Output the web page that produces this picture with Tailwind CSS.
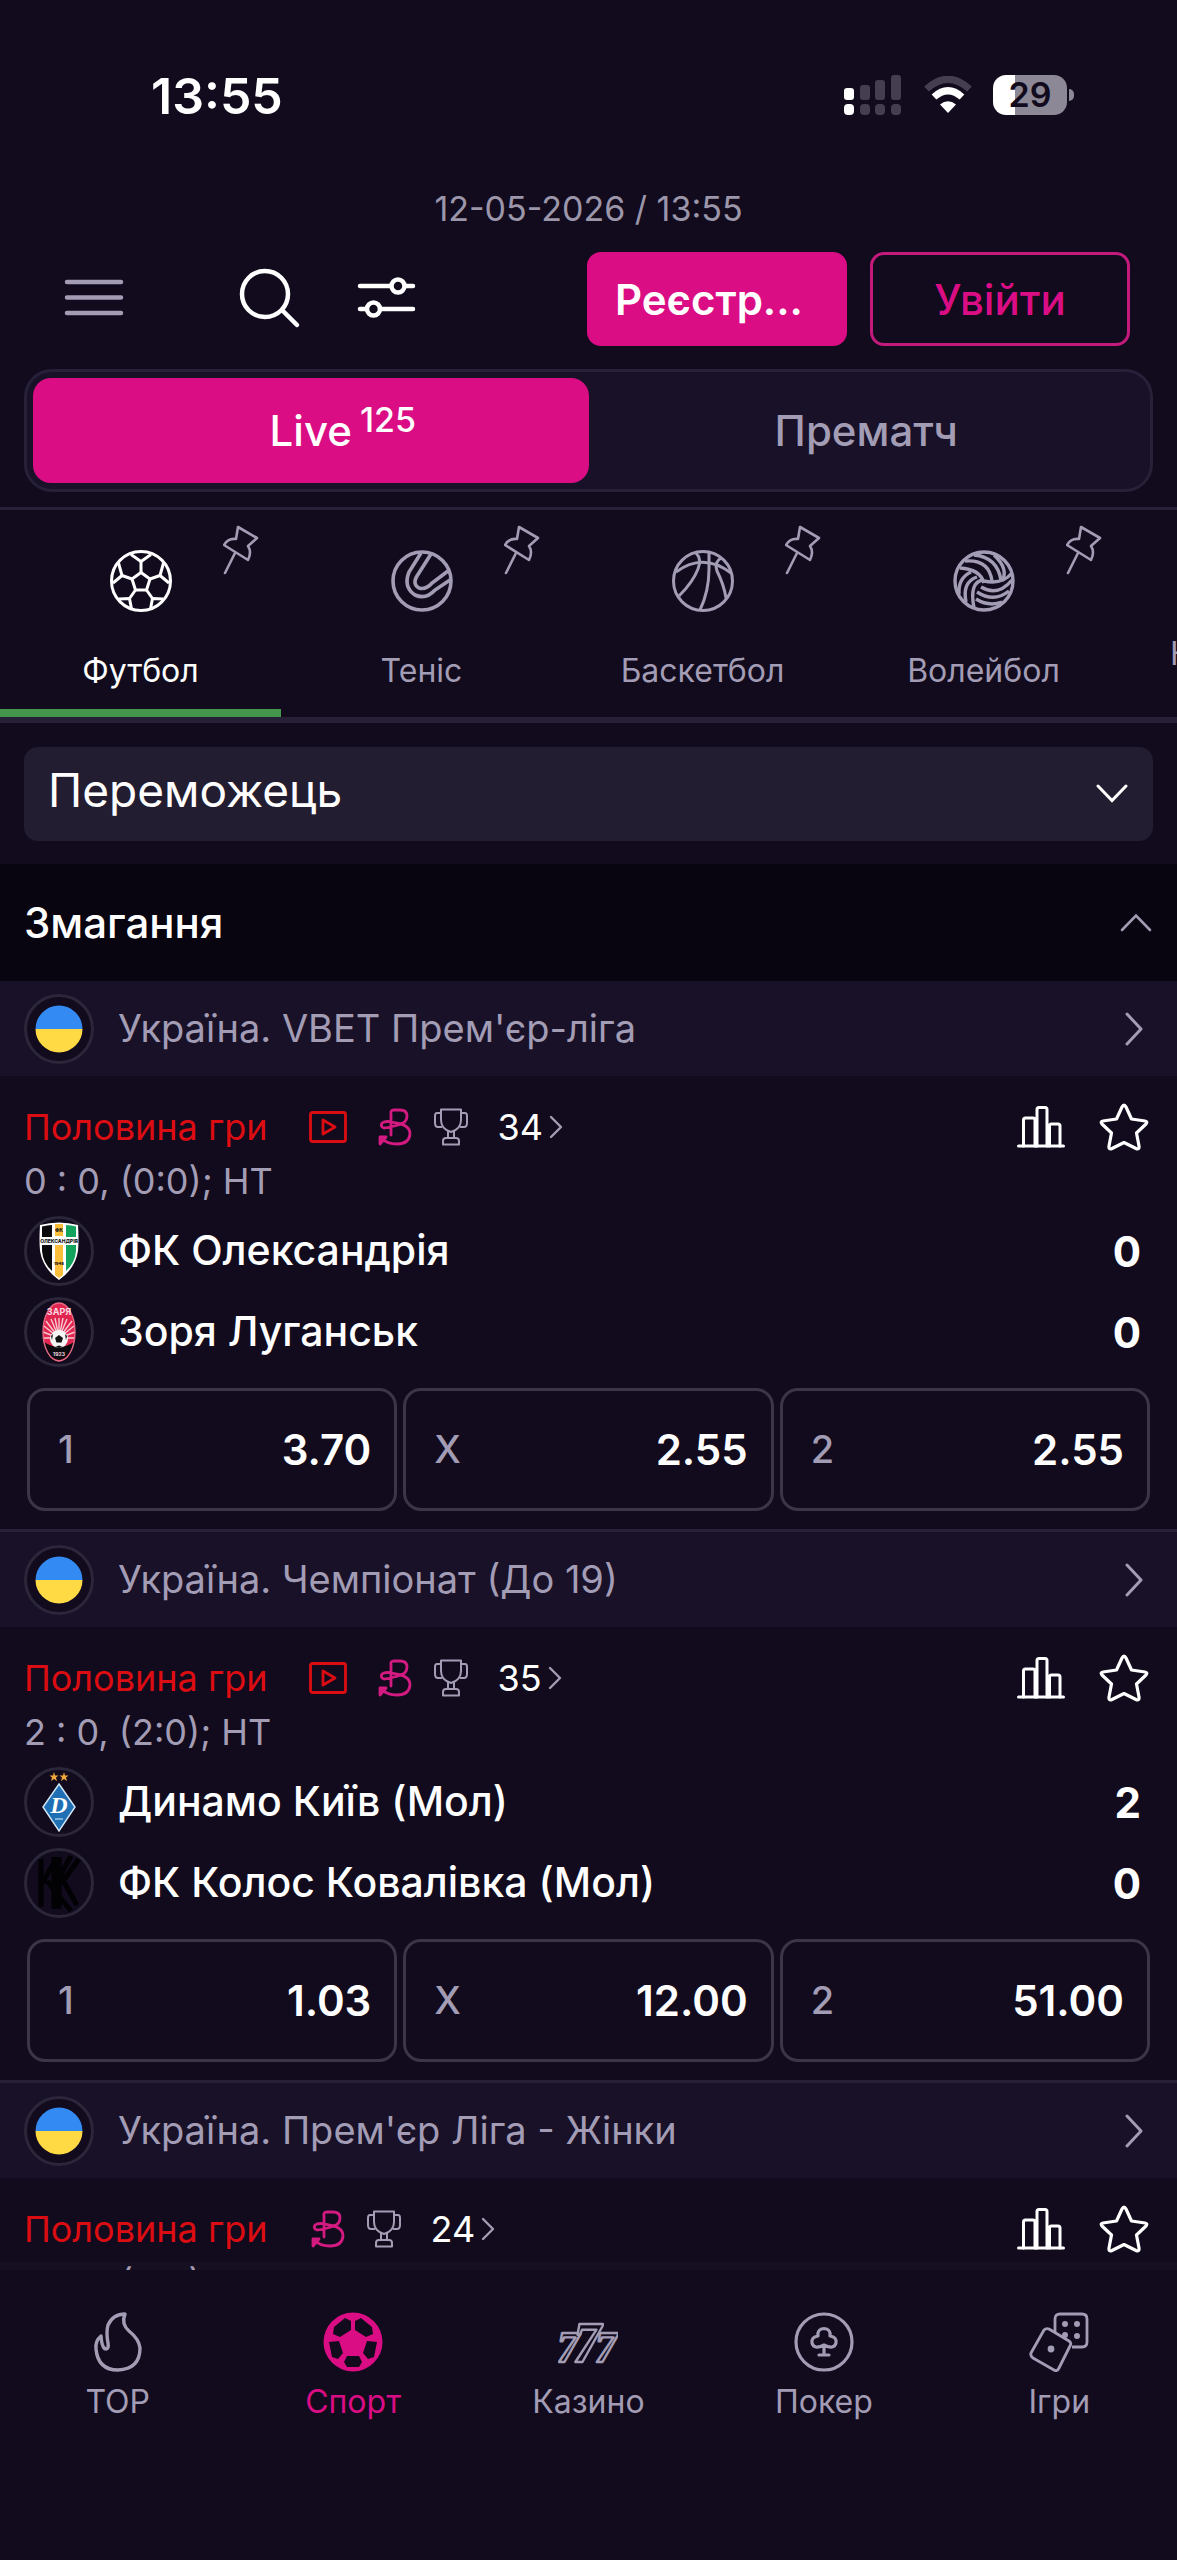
<!DOCTYPE html>
<html lang="uk">
<head>
  <meta charset="UTF-8" />
  <meta name="viewport" content="width=device-width, initial-scale=1.0" />
  <title>Спорт Live</title>
  <script src="https://cdn.jsdelivr.net/npm/@tailwindcss/browser@4"></script>
</head>
<body class="bg-[#110b1d] text-white font-['Inter','Noto_Sans',sans-serif] flex flex-col h-screen overflow-hidden">

  <!-- SVG symbols shared by the page -->
  <svg class="hidden">
    <symbol id="pin" viewBox="0 0 36 50">
      <path d="M15 2 L34 13 L25 21 Q29 27 25 35 L1 20 Q5 13 13 14 Z M12 28 L2 48" fill="none" stroke="currentColor" stroke-width="2.6" stroke-linejoin="round" stroke-linecap="round" />
    </symbol>
    <symbol id="chevron-right" viewBox="0 0 18 34">
      <path d="M2 2 L16 17 L2 32" fill="none" stroke="currentColor" stroke-width="3" stroke-linecap="round" stroke-linejoin="round" />
    </symbol>
    <symbol id="chevron-small" viewBox="0 0 14 24">
      <path d="M2 2 L12 12 L2 22" fill="none" stroke="currentColor" stroke-width="2.4" stroke-linecap="round" stroke-linejoin="round" />
    </symbol>
    <symbol id="video" viewBox="0 0 38 32">
      <g fill="none" stroke="currentColor" stroke-width="2.8" stroke-linejoin="round">
        <rect x="1.5" y="1.5" width="35" height="29" rx="2" />
        <path d="M14 9 L26 16 L14 23 Z" />
      </g>
    </symbol>
    <symbol id="bet" viewBox="0 0 34 38">
      <g fill="none" stroke="currentColor" stroke-width="2.8" stroke-linecap="round" stroke-linejoin="round">
        <path d="M13 27 V6 Q12 2 16 2 H22 Q29 2 29 8 Q29 15 20 17 Q10 20 6 20 Q2 19 4 15 Q8 12 18 15 Q32 17 32 26 Q31 36 19 36 Q9 36 3 30" />
        <path d="M2 36 V29 H8 Z" />
      </g>
    </symbol>
    <symbol id="trophy" viewBox="0 0 34 38">
      <g fill="none" stroke="currentColor" stroke-width="2" stroke-linejoin="round">
        <path d="M7 1.5 H27 V12 Q27 21 17 24 Q7 21 7 12 Z" />
        <path d="M7 5 H3 Q1 5 1 8 V15 Q1 19 4 19 H8 M27 5 H31 Q33 5 33 8 V15 Q33 19 30 19 H26" />
        <path d="M14 23 V30 M20 23 V30 M9 36.5 V33 Q9 30 12 30 H22 Q25 30 25 33 V36.5 Z" />
      </g>
    </symbol>
    <symbol id="stats" viewBox="0 0 48 42">
      <g fill="none" stroke="currentColor" stroke-width="3" stroke-linejoin="round" stroke-linecap="round">
        <path d="M1.5 40 H46.5" />
        <path d="M6.5 40 V14 Q6.5 12 8.5 12 H16 Q18 12 18 14 V40 M20 40 V3.5 Q20 1.5 22 1.5 H28 Q30 1.5 30 3.5 V40 M32.5 40 V20 Q32.5 18 34.5 18 H41 Q43 18 43 20 V40" />
      </g>
    </symbol>
    <symbol id="star" viewBox="0 0 50 48">
      <path d="M25 2 Q26 2 27 4 L32.5 16 L46 18 Q49 18.5 47 21 L37.5 30 L40 43 Q40.5 47 37 45.5 L25 39.5 L13 45.5 Q9.5 47 10 43 L12.5 30 L3 21 Q1 18.5 4 18 L17.5 16 L23 4 Q24 2 25 2 Z" fill="none" stroke="currentColor" stroke-width="3.2" stroke-linejoin="round" />
    </symbol>
    <symbol id="flag-ua" viewBox="0 0 48 48">
      <path d="M0.5 24 A23.5 23.5 0 0 1 47.5 24 Z" fill="#338af3" />
      <path d="M0.5 24 A23.5 23.5 0 0 0 47.5 24 Z" fill="#ffda44" />
    </symbol>
  </svg>

  <!-- Status bar -->
  <div class="h-48 shrink-0 flex items-start justify-between pt-[66px] pl-[151px] pr-[103px]">
    <span class="text-[50px] leading-[60px] font-semibold">13:55</span>
    <div class="flex items-center gap-[20px] h-[58px]">
      <svg class="w-[60px] h-[40px]" viewBox="0 0 60 40">
        <g fill="#fff"><rect x="1" y="13" width="10" height="12" rx="3" /><rect x="1" y="29" width="10" height="11" rx="4" /></g>
        <g fill="#443e50">
          <rect x="17" y="10" width="10" height="15" rx="3" /><rect x="17" y="29" width="10" height="11" rx="4" />
          <rect x="32" y="5" width="10" height="20" rx="3" /><rect x="32" y="29" width="10" height="11" rx="4" />
          <rect x="48" y="0" width="10" height="25" rx="3" /><rect x="48" y="29" width="10" height="11" rx="4" />
        </g>
      </svg>
      <svg class="w-[50px] h-[38px]" viewBox="0 0 50 38">
        <path d="M3.5 13 Q25 -6.5 46.5 13" fill="none" stroke="#443e50" stroke-width="7" />
        <path d="M11 21 Q25 8.5 39 21" fill="none" stroke="#fff" stroke-width="7" />
        <path d="M17 28.5 Q25 22 33 28.5 L25 37 Z" fill="#fff" />
      </svg>
      <div class="flex items-center gap-[2px]">
        <div class="w-[74px] h-[40px] rounded-[13px] bg-linear-to-r from-white from-30% to-[#8d8896] to-30% text-[#110b1d] text-[34px] leading-[40px] font-semibold text-center">29</div>
        <div class="w-[5px] h-[12px] rounded-r-full bg-[#8d8896]"></div>
      </div>
    </div>
  </div>

  <!-- Header -->
  <header class="shrink-0">
    <p class="text-center text-[34px] leading-[34px] text-[#9c96ab]">12-05-2026 / 13:55</p>
    <div class="flex items-center pl-[64px] pr-[47px] mt-[26px] h-[94px]">
      <button aria-label="Меню" class="text-[#a39cb5]">
        <svg class="w-[60px] h-[60px]" viewBox="0 0 60 60"><path d="M3 13 H57 M3 28.5 H57 M3 44 H57" stroke="currentColor" stroke-width="4.5" stroke-linecap="round" /></svg>
      </button>
      <button aria-label="Пошук" class="ml-[115px]">
        <svg class="w-[62px] h-[62px]" viewBox="0 0 62 62"><g fill="none" stroke="#fff" stroke-width="4.5" stroke-linecap="round"><circle cx="26" cy="26" r="23" /><path d="M43 42 L58 57" /></g></svg>
      </button>
      <button aria-label="Фільтр" class="ml-[56px]">
        <svg class="w-[60px] h-[60px]" viewBox="0 0 60 60"><g fill="none" stroke="#fff" stroke-width="4.5" stroke-linecap="round"><path d="M3 17 H34 M48 17 H56 M3 40 H9 M23 40 H56" /><circle cx="41" cy="17" r="6.5" /><circle cx="16.5" cy="40" r="6.5" /></g></svg>
      </button>
      <button class="ml-auto w-[260px] h-full rounded-[14px] bg-[#db0d84] text-[42px] font-semibold pl-[28px] text-left">Реєстр...</button>
      <button class="ml-[23px] w-[260px] h-full rounded-[14px] border-3 border-[#c31a7c] text-[#db0d84] text-[42px] font-medium">Увійти</button>
    </div>
    <div class="mx-[24px] mt-[23px] h-[123px] flex rounded-[28px] border-3 border-[#262138] bg-[#181128] p-[6px]">
      <button class="flex-1 rounded-[18px] bg-[#db0d84] text-[42px] font-medium">
        <span class="relative">Live<span class="absolute left-full bottom-[11px] ml-[8px] text-[34px]">125</span></span>
      </button>
      <button class="flex-1 text-[42px] font-medium text-[#a39cb5]">Прематч</button>
    </div>
  </header>

  <!-- Sports -->
  <nav class="mt-[15px] shrink-0 border-t-3 border-b-6 border-[#262136] h-[216px] flex overflow-hidden text-[32px] text-[#a39cb5]">
    <a href="#" class="relative w-[281px] shrink-0 flex flex-col items-center pt-[39px] border-b-8 border-[#43964a] text-white">
      <svg class="w-[64px] h-[64px]" viewBox="0 0 64 64">
        <g fill="none" stroke="currentColor" stroke-width="3" stroke-linejoin="round">
          <circle cx="32" cy="32" r="29.5" />
          <path d="M32 23.5 L41 30 L37.5 41 H26.5 L23 30 Z" />
          <path d="M32 23.5 V12.5 M41 30 L51 26.5 M37.5 41 L43.5 49.5 M26.5 41 L20.5 49.5 M23 30 L13 26.5" />
          <path d="M22 5.5 L32 12.5 L42 5.5 M54.5 14 L51 26.5 L60 34 M54 50 L43.5 49.5 L41.5 60 M22.5 60 L20.5 49.5 L10 50 M4 34 L13 26.5 L9.5 14" />
        </g>
      </svg>
      <svg class="absolute top-[15px] right-[22px] w-[36px] h-[50px] text-[#a39cb5]"><use href="#pin" /></svg>
      <span class="mt-[35px] leading-[46px]">Футбол</span>
    </a>
    <a href="#" class="relative w-[281px] shrink-0 flex flex-col items-center pt-[39px]">
      <svg class="w-[64px] h-[64px]" viewBox="0 0 64 64">
        <g fill="none" stroke="currentColor" stroke-width="3.6">
          <circle cx="32" cy="32" r="29" />
          <path d="M31 4 L19 23 Q13 38 25 46 Q36 51 45 41 L60 31" />
          <path d="M41 5 L27 27 Q22 35 29 39 Q36 41 42 34 L58 22" />
        </g>
      </svg>
      <svg class="absolute top-[15px] right-[22px] w-[36px] h-[50px]"><use href="#pin" /></svg>
      <span class="mt-[35px] leading-[46px]">Теніс</span>
    </a>
    <a href="#" class="relative w-[281px] shrink-0 flex flex-col items-center pt-[39px]">
      <svg class="w-[64px] h-[64px]" viewBox="0 0 64 64">
        <g fill="none" stroke="currentColor" stroke-width="3">
          <circle cx="32" cy="32" r="29.5" />
          <path d="M5 23 Q32 3 60 24" />
          <path d="M25 4 Q31 10 27 20 Q22 33 8 47 M38 3 V20 Q38 42 29 61 M50 9 Q43 13 46 22 Q53 36 55 49" />
        </g>
      </svg>
      <svg class="absolute top-[15px] right-[22px] w-[36px] h-[50px]"><use href="#pin" /></svg>
      <span class="mt-[35px] leading-[46px]">Баскетбол</span>
    </a>
    <a href="#" class="relative w-[281px] shrink-0 flex flex-col items-center pt-[39px]">
      <svg class="w-[64px] h-[64px]" viewBox="0 0 64 64">
        <g fill="none" stroke="currentColor" stroke-width="3.4">
          <circle cx="32" cy="32" r="29" />
          <path d="M40 32 Q37 10 13 12 M32 34 Q28 20 8 19 M49 31 Q45 8 22 6" />
          <path d="M50 32 Q57 20 42 6 M31 31 Q17 33 22 59 M25 28 Q10 33 14 53 M19 23 Q6 29 7 45" />
          <path d="M29 38 Q46 48 60 31 M25 43 Q42 54 57 42 M24 50 Q37 58 50 53 M32 32 Q50 36 60 24" />
        </g>
      </svg>
      <svg class="absolute top-[15px] right-[22px] w-[36px] h-[50px]"><use href="#pin" /></svg>
      <span class="mt-[35px] leading-[46px]">Волейбол</span>
    </a>
    <a href="#" class="w-[281px] shrink-0 pt-[120px] pl-[46px]"><span class="leading-[40px]">Кіберспорт</span></a>
  </nav>

  <!-- Matches -->
  <main class="flex-1 min-h-0 overflow-hidden">
    <div class="relative mx-[24px] mt-[24px] mb-[23px]">
      <select aria-label="Ринок" class="block appearance-none w-full h-[94px] rounded-[14px] bg-[#231d31] pl-[24px] pb-[8px] text-[46px] text-white">
        <option>Переможець</option>
      </select>
      <svg class="absolute right-[25px] top-[37px] w-[32px] h-[19px] pointer-events-none" viewBox="0 0 32 19"><path d="M2 2 L16 16.5 L30 2" fill="none" stroke="#fff" stroke-width="3" stroke-linecap="round" /></svg>
    </div>

    <button class="flex w-full items-center justify-between bg-[#080410] h-[117px] pl-[24px] pr-[25px] text-[42px] font-medium">
      Змагання
      <svg class="w-[32px] h-[19px] text-[#a39cb5]" viewBox="0 0 32 19"><path d="M2 17 L16 2.5 L30 17" fill="none" stroke="currentColor" stroke-width="2.6" stroke-linecap="round" /></svg>
    </button>

    <!-- Прем'єр-ліга -->
    <section>
      <a href="#" class="flex items-center h-[95px] bg-[#181128] pl-[24px] pr-[34px] text-[38px] text-[#a39cb5]">
        <span class="size-[70px] rounded-full border-3 border-[#2b263a] bg-[#110b1d] flex items-center justify-center"><svg class="size-[48px]"><use href="#flag-ua" /></svg></span>
        <span class="ml-[24px] flex-1">Україна. VBET Прем'єр-ліга</span>
        <svg class="w-[18px] h-[34px]"><use href="#chevron-right" /></svg>
      </a>
      <div class="px-[24px] pt-[24px] pb-[18px]">
        <div class="flex items-center h-[54px] text-[36px]">
          <span class="text-[#dc0d12]">Половина гри</span>
          <svg class="ml-[42px] w-[38px] h-[32px] text-[#dc0d12]"><use href="#video" /></svg>
          <svg class="ml-[31px] w-[34px] h-[38px] text-[#d31a80]"><use href="#bet" /></svg>
          <svg class="ml-[22px] w-[34px] h-[38px] text-[#a39cb5]"><use href="#trophy" /></svg>
          <a href="#" class="ml-[29px] flex items-center gap-[6px]">34 <svg class="w-[14px] h-[24px] text-[#a39cb5]"><use href="#chevron-small" /></svg></a>
          <button aria-label="Статистика" class="ml-auto"><svg class="w-[48px] h-[42px]"><use href="#stats" /></svg></button>
          <button aria-label="Обране" class="ml-[34px] mr-[4px]"><svg class="w-[50px] h-[48px]"><use href="#star" /></svg></button>
        </div>
        <p class="text-[36px] leading-[54px] text-[#a39cb5]">0 : 0, (0:0); HT</p>
        <div class="mt-[8px] h-[70px] flex items-center text-[41px] font-medium">
          <span class="size-[70px] rounded-full border-3 border-[#2b263a] flex items-center justify-center">
            <svg class="size-[64px]" viewBox="0 0 64 64">
              <path d="M13 6 Q32 1 51 6 Q52 20 51 32 Q48 50 32 61 Q16 50 13 32 Q12 20 13 6 Z" fill="#fff" />
              <path d="M15 7.5 Q20 6 25 6 V18 H15 Z M15 26 H25 V52 Q16 44 15 32 Z" fill="#0a0a0c" />
              <path d="M28 5 H36 V17 H28 Z M28 26 H36 V56 L32 59 L28 56 Z" fill="#fbbf3c" />
              <path d="M39 6 Q44 6 49 7.5 V18 H39 Z M39 26 H49 V32 Q48 44 39 52 Z" fill="#12a35c" />
              <g fill="#111" font-weight="800" text-anchor="middle">
                <text x="32" y="13" font-size="5">ФК</text>
                <text x="32" y="24" font-size="5">ОЛЕКСАНДРІЯ</text>
                <text x="32" y="46" font-size="4">1948</text>
              </g>
            </svg>
          </span>
          <span class="ml-[24px] flex-1">ФК Олександрія</span>
          <span class="pr-[12px] text-[42px] font-bold">0</span>
        </div>
        <div class="mt-[11px] h-[70px] flex items-center text-[41px] font-medium">
          <span class="size-[70px] rounded-full border-3 border-[#2b263a] flex items-center justify-center">
            <svg class="size-[64px]" viewBox="0 0 64 64">
              <ellipse cx="32" cy="32" rx="16" ry="29" fill="#e0254f" />
              <path d="M32 38 L17 26 M32 38 L19 21 M32 38 L24 19 M32 38 L28 18 M32 38 V18 M32 38 L36 18 M32 38 L40 19 M32 38 L45 21 M32 38 L47 26 M32 38 L48 32 M32 38 L16 32 M32 38 L16 38 M32 38 L48 38" stroke="#f8c9d3" stroke-width="1.4" />
              <path d="M17 42 Q32 52 47 42 Q43 59 32 60 Q21 59 17 42 Z" fill="#0c0a0e" />
              <circle cx="32" cy="39" r="9" fill="#f4f4f4" />
              <path d="M32 35 L36 38 L34.5 42.5 H29.5 L28 38 Z M24 36 L26 34 L25 40 Z M40 36 L38 34 L39 40 Z M28 47 L32 45.5 L36 47 L32 48 Z" fill="#111" />
              <ellipse cx="32" cy="32" rx="16" ry="29" fill="none" stroke="#e86a85" stroke-width="1.4" />
              <g fill="#fbdbe2" font-weight="700" text-anchor="middle">
                <text x="32" y="15" font-size="9">ЗАРЯ</text>
                <text x="32" y="56" font-size="5">1923</text>
              </g>
            </svg>
          </span>
          <span class="ml-[24px] flex-1">Зоря Луганськ</span>
          <span class="pr-[12px] text-[42px] font-bold">0</span>
        </div>
        <div class="mt-[21px] mx-[3px] grid grid-cols-3 gap-[6px]">
          <button class="h-[123px] rounded-[18px] border-3 border-[#3a3549] pl-[28px] pr-[23px] flex items-center justify-between"><span class="text-[38px] font-medium text-[#a39cb5]">1</span><span class="text-[42px] font-semibold">3.70</span></button>
          <button class="h-[123px] rounded-[18px] border-3 border-[#3a3549] pl-[28px] pr-[23px] flex items-center justify-between"><span class="text-[38px] font-medium text-[#a39cb5]">X</span><span class="text-[42px] font-semibold">2.55</span></button>
          <button class="h-[123px] rounded-[18px] border-3 border-[#3a3549] pl-[28px] pr-[23px] flex items-center justify-between"><span class="text-[38px] font-medium text-[#a39cb5]">2</span><span class="text-[42px] font-semibold">2.55</span></button>
        </div>
      </div>
    </section>

    <!-- Чемпіонат U19 -->
    <section>
      <a href="#" class="flex items-center h-[98px] border-t-3 border-[#262136] bg-[#181128] pl-[24px] pr-[34px] text-[38px] text-[#a39cb5]">
        <span class="size-[70px] rounded-full border-3 border-[#2b263a] bg-[#110b1d] flex items-center justify-center"><svg class="size-[48px]"><use href="#flag-ua" /></svg></span>
        <span class="ml-[24px] flex-1">Україна. Чемпіонат (До 19)</span>
        <svg class="w-[18px] h-[34px]"><use href="#chevron-right" /></svg>
      </a>
      <div class="px-[24px] pt-[24px] pb-[18px]">
        <div class="flex items-center h-[54px] text-[36px]">
          <span class="text-[#dc0d12]">Половина гри</span>
          <svg class="ml-[42px] w-[38px] h-[32px] text-[#dc0d12]"><use href="#video" /></svg>
          <svg class="ml-[31px] w-[34px] h-[38px] text-[#d31a80]"><use href="#bet" /></svg>
          <svg class="ml-[22px] w-[34px] h-[38px] text-[#a39cb5]"><use href="#trophy" /></svg>
          <a href="#" class="ml-[29px] flex items-center gap-[6px]">35 <svg class="w-[14px] h-[24px] text-[#a39cb5]"><use href="#chevron-small" /></svg></a>
          <button aria-label="Статистика" class="ml-auto"><svg class="w-[48px] h-[42px]"><use href="#stats" /></svg></button>
          <button aria-label="Обране" class="ml-[34px] mr-[4px]"><svg class="w-[50px] h-[48px]"><use href="#star" /></svg></button>
        </div>
        <p class="text-[36px] leading-[54px] text-[#a39cb5]">2 : 0, (2:0); HT</p>
        <div class="mt-[8px] h-[70px] flex items-center text-[41px] font-medium">
          <span class="size-[70px] rounded-full border-3 border-[#2b263a] flex items-center justify-center">
            <svg class="size-[64px]" viewBox="0 0 64 64">
              <path d="M27 2 L28 5.5 H31.5 L29 7.5 L30 11 L27 9 L24 11 L25 7.5 L22.5 5.5 H26 Z M37 2 L38 5.5 H41.5 L39 7.5 L40 11 L37 9 L34 11 L35 7.5 L32.5 5.5 H36 Z" fill="#f2a73b" />
              <path d="M32 14 L48 37 L32 61 L16 37 Z" fill="#1f6fb5" stroke="#cfe4f5" stroke-width="1.5" />
              <text x="32" y="43" font-size="24" font-weight="700" font-style="italic" font-family="Liberation Serif" text-anchor="middle" fill="#fff">D</text>
              <path d="M28 49 H36" stroke="#9cc7e8" stroke-width="1.5" />
            </svg>
          </span>
          <span class="ml-[24px] flex-1">Динамо Київ (Мол)</span>
          <span class="pr-[12px] text-[42px] font-bold">2</span>
        </div>
        <div class="mt-[11px] h-[70px] flex items-center text-[41px] font-medium">
          <span class="size-[70px] rounded-full border-3 border-[#2b263a] flex items-center justify-center">
            <svg class="size-[64px]" viewBox="0 0 64 64">
              <path d="M14 8 V56 M27 6 V58 M32 6 V58 M30 30 L44 5 M14 34 L28 10 M36 30 L52 8 M34 26 L50 54 M20 30 L44 60" fill="none" stroke="#020104" stroke-width="5" />
            </svg>
          </span>
          <span class="ml-[24px] flex-1">ФК Колос Ковалівка (Мол)</span>
          <span class="pr-[12px] text-[42px] font-bold">0</span>
        </div>
        <div class="mt-[21px] mx-[3px] grid grid-cols-3 gap-[6px]">
          <button class="h-[123px] rounded-[18px] border-3 border-[#3a3549] pl-[28px] pr-[23px] flex items-center justify-between"><span class="text-[38px] font-medium text-[#a39cb5]">1</span><span class="text-[42px] font-semibold">1.03</span></button>
          <button class="h-[123px] rounded-[18px] border-3 border-[#3a3549] pl-[28px] pr-[23px] flex items-center justify-between"><span class="text-[38px] font-medium text-[#a39cb5]">X</span><span class="text-[42px] font-semibold">12.00</span></button>
          <button class="h-[123px] rounded-[18px] border-3 border-[#3a3549] pl-[28px] pr-[23px] flex items-center justify-between"><span class="text-[38px] font-medium text-[#a39cb5]">2</span><span class="text-[42px] font-semibold">51.00</span></button>
        </div>
      </div>
    </section>

    <!-- Жінки -->
    <section>
      <a href="#" class="flex items-center h-[98px] border-t-3 border-[#262136] bg-[#181128] pl-[24px] pr-[34px] text-[38px] text-[#a39cb5]">
        <span class="size-[70px] rounded-full border-3 border-[#2b263a] bg-[#110b1d] flex items-center justify-center"><svg class="size-[48px]"><use href="#flag-ua" /></svg></span>
        <span class="ml-[24px] flex-1">Україна. Прем'єр Ліга - Жінки</span>
        <svg class="w-[18px] h-[34px]"><use href="#chevron-right" /></svg>
      </a>
      <div class="px-[24px] pt-[24px] pb-[18px]">
        <div class="flex items-center h-[54px] text-[36px]">
          <span class="text-[#dc0d12]">Половина гри</span>
          <svg class="ml-[44px] w-[34px] h-[38px] text-[#d31a80]"><use href="#bet" /></svg>
          <svg class="ml-[22px] w-[34px] h-[38px] text-[#a39cb5]"><use href="#trophy" /></svg>
          <a href="#" class="ml-[29px] flex items-center gap-[6px]">24 <svg class="w-[14px] h-[24px] text-[#a39cb5]"><use href="#chevron-small" /></svg></a>
          <button aria-label="Статистика" class="ml-auto"><svg class="w-[48px] h-[42px]"><use href="#stats" /></svg></button>
          <button aria-label="Обране" class="ml-[34px] mr-[4px]"><svg class="w-[50px] h-[48px]"><use href="#star" /></svg></button>
        </div>
        <p class="text-[36px] leading-[54px] text-[#a39cb5]">0 : 0, (0:0); HT</p>
      </div>
    </section>
  </main>

  <!-- Bottom menu -->
  <nav class="relative h-[290px] shrink-0 bg-[#110b1d] shadow-[0_-8px_0_rgba(255,255,255,0.02)] grid grid-cols-5 pt-[42px] text-[32px] leading-[40px] text-[#a39cb5]">
    <a href="#" class="flex flex-col items-center gap-[10px]">
      <svg class="size-[60px]" viewBox="0 0 60 60">
        <path d="M37 2 Q25 2 20 13 Q18 20 20 31 Q21 37 18 37 Q14 37 13 24 Q7 29 8 37 Q10 58 30 58 Q52 57 52 36 Q51 27 41 19 Q33 12 37 2 Z" fill="none" stroke="currentColor" stroke-width="3.4" stroke-linejoin="round" />
      </svg>
      TOP
    </a>
    <a href="#" class="flex flex-col items-center gap-[10px] text-[#db0d84]">
      <svg class="size-[60px]" viewBox="0 0 60 60">
        <circle cx="30" cy="30" r="29.5" fill="currentColor" />
        <path d="M11 15 L22 6 L28 9 V18 L17 25 L10 22 Z M49 15 L38 6 L32 9 V18 L43 25 L50 22 Z M6 30 L16 29 L20 41 L15 47 L9 45 Z M54 30 L44 29 L40 41 L45 47 L51 45 Z M24 44 H36 L39 50 L36 55 H24 L21 50 Z" fill="#110b1d" />
      </svg>
      Спорт
    </a>
    <a href="#" class="flex flex-col items-center gap-[10px]">
      <svg class="size-[60px]" viewBox="0 0 60 60">
        <g font-family="Liberation Serif" font-weight="700" font-style="italic" text-anchor="middle" fill="#110b1d" stroke="currentColor" stroke-width="2.4" stroke-linejoin="round">
          <text x="10" y="50" font-size="44">7</text>
          <text x="48" y="50" font-size="44">7</text>
          <text x="29" y="50" font-size="56">7</text>
        </g>
      </svg>
      Казино
    </a>
    <a href="#" class="flex flex-col items-center gap-[10px]">
      <svg class="size-[60px]" viewBox="0 0 60 60">
        <g fill="none" stroke="currentColor" stroke-width="3.2" stroke-linecap="round" stroke-linejoin="round">
          <circle cx="30" cy="30" r="28" />
          <path d="M24 24 Q23 17 30 16.5 Q37 17 36 24 Q43 25 42 31 Q40 38 30 33 Q20 38 18 31 Q17 25 24 24 Z M30 34 V42 M25 43 H35" />
        </g>
      </svg>
      Покер
    </a>
    <a href="#" class="flex flex-col items-center gap-[10px]">
      <svg class="size-[60px]" viewBox="0 0 60 60">
        <g fill="none" stroke="currentColor" stroke-width="2.8" stroke-linejoin="round">
          <path d="M26 20 V7 Q26 2 31 2 H53 Q58 2 58 7 V30 Q58 35 53 35 H43" />
          <path d="M15 18 Q17 16 20 17 L40 29 Q43 31 41 34 L30 56 Q28 60 25 58 L4 46 Q1 44 2 41 Z" />
        </g>
        <g fill="currentColor">
          <circle cx="36" cy="12" r="3" /><circle cx="48" cy="12" r="3" /><circle cx="48" cy="24" r="3" /><circle cx="36" cy="23" r="3" /><circle cx="22" cy="37" r="3.4" />
        </g>
      </svg>
      Ігри
    </a>
  </nav>
</body>
</html>
